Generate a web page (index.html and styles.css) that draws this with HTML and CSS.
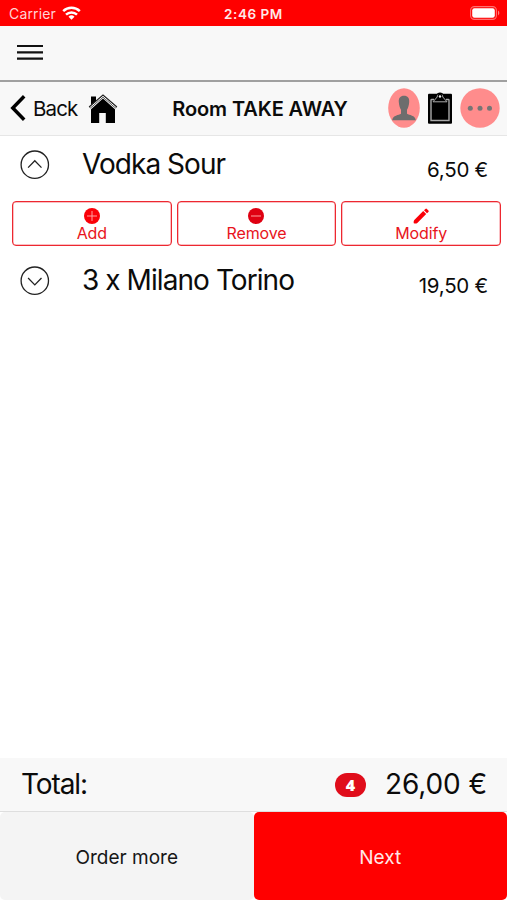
FILE: index.html
```html
<!DOCTYPE html>
<html lang="en">
<head>
<meta charset="utf-8">
<meta name="viewport" content="width=device-width, initial-scale=1">
<title>Room TAKE AWAY</title>
<link rel="stylesheet" href="styles.css">
</head>
<body>
<div class="app">
  <div class="status">
    <div class="status-left">
      <span class="carrier">Carrier</span>
      <svg class="wifi" width="19" height="14" viewBox="0 0 19 14" fill="none" stroke="#fff" stroke-width="2.5"><path d="M1.200 5.200a12 12 0 0 1 16.600 0"/><path d="M4 8.600a8 8 0 0 1 11 0"/><path d="M9.500 13.800 6.500 10.800a4.300 4.300 0 0 1 6 0z" fill="#fff" stroke="none"/></svg>
    </div>
    <span class="clock">2:46 PM</span>
    <svg class="battery" width="30" height="14" viewBox="0 0 30 14"><rect x=".6" y=".6" width="25.800" height="12.800" rx="3.800" fill="none" stroke="#ff7070" stroke-width="1.100"/><rect x="2.200" y="2.200" width="22.600" height="9.600" rx="2.200" fill="#fff"/><path d="M28 4.600c1.800.8 1.800 4 0 4.800z" fill="#ff8080"/></svg>
  </div>
  <header class="menu-bar">
    <svg width="26" height="18" viewBox="0 0 26 18" stroke="#111" stroke-width="2.200"><path d="M0 3h26M0 9.300h26M0 15.600h26"/></svg>
  </header>
  <nav class="nav">
    <div class="nav-left">
      <svg class="chevron" width="16" height="26" viewBox="0 0 16 26" fill="none" stroke="#000" stroke-width="3.500"><path d="M14.200 1.300 2.800 13l11.400 11.700"/></svg>
      <span class="back">Back</span>
      <svg class="home" width="30" height="30" viewBox="0 0 30 30"><path d="M3 2.500h5v4.700L3 11z"/><path d="M15 4.500 3 15.200V29h8.200V19h6.600v10H27V15.200z"/><path d="M1.500 13.500 15 1.800 28.500 13.500" fill="none" stroke="#222" stroke-width="2.400"/><path d="M1.800 13.700 15 2.300 28.200 13.700" fill="none" stroke="#f8f8f8" stroke-width="1"/></svg>
    </div>
    <h1 class="title">Room TAKE AWAY</h1>
    <div class="nav-right">
      <svg width="32" height="40" viewBox="0 0 32 40"><ellipse cx="16" cy="20" rx="15.800" ry="19.700" fill="#ff8c8c"/><path d="M16 7.800c-3.800 0-5.500 2.400-5.200 6.200.2 3.600 1.300 6.300 2.200 7.700v4c-2.200 1.500-8.200 1.400-8.800 6.500h23.600c-.6-5.100-6.600-5-8.800-6.500v-4c.9-1.400 2-4.100 2.200-7.700.3-3.800-1.400-6.200-5.200-6.200z" fill="#6d6d6d"/></svg>
      <svg width="24" height="32" viewBox="0 0 24 32"><rect y="1.700" width="24" height="30" rx="1"/><path d="M6 7.500H3.700q-.7 0-.7.700v20.300h18V8.200q0-.7-.7-.7H18" fill="none" stroke="#aaa" stroke-width="1.400"/><path d="M5 9.800 9.200 5c.3-5 5.300-5 5.600 0L19 9.800z" stroke="#aaa" stroke-width="1"/><path d="M8.500 2.700C9.500-.2 14.500-.2 15.500 2.700z"/><circle cx="12" cy="4.500" r="1.200" fill="#eee"/></svg>
      <svg width="40" height="40" viewBox="0 0 40 40"><circle cx="20" cy="20" r="19.700" fill="#ff8c8c"/><g fill="#757575"><circle cx="10.300" cy="20.300" r="2.500"/><circle cx="20" cy="20.300" r="2.500"/><circle cx="29.500" cy="20.300" r="2.500"/></g></svg>
    </div>
  </nav>
  <main class="order">
    <div class="item">
      <svg class="toggle" width="30" height="30" viewBox="0 0 30 30" fill="none" stroke="#222" stroke-width="1.300"><circle cx="14.800" cy="14.700" r="13.700"/><path d="m8.100 17.600 6.700-6.900 6.700 6.900"/></svg>
      <span class="name vodka">Vodka Sour</span>
      <span class="price">6,50 €</span>
    </div>
    <div class="actions">
      <button class="action"><svg width="16" height="16" viewBox="0 0 16 16"><circle cx="8" cy="8" r="8" fill="#fa0008"/><path d="M8 3v10M3 8h10" stroke="#ffa0a0"/></svg><span>Add</span></button>
      <button class="action"><svg width="16" height="16" viewBox="0 0 16 16"><circle cx="8" cy="8" r="8" fill="#df0012"/><path d="M3 8h10" stroke="#ffa0a0"/></svg><span>Remove</span></button>
      <button class="action"><svg width="16" height="16" viewBox="0 0 16 16" fill="#fa0008"><path d="M.8 15.200q-.5-1.800.5-3.200l8.900-8.900 3 3L4.300 15q-1.500.9-3.500.2zM11 2.300 12.400.9q.7-.7 1.500 0l1.500 1.500q.7.800 0 1.500L14 5.300z"/></svg><span>Modify</span></button>
    </div>
    <div class="item">
      <svg class="toggle" width="30" height="30" viewBox="0 0 30 30" fill="none" stroke="#222" stroke-width="1.300"><circle cx="14.800" cy="14.700" r="13.700"/><path d="m8.100 12 6.700 6.900 6.700-6.900"/></svg>
      <span class="name milano">3 x Milano Torino</span>
      <span class="price">19,50 €</span>
    </div>
  </main>
  <div class="total">
    <span class="total-label">Total:</span>
    <span class="badge">4</span>
    <span class="total-sum">26,00 €</span>
  </div>
  <footer class="footer">
    <button class="more">Order more</button>
    <button class="next">Next</button>
  </footer>
</div>
</body>
</html>
```
FILE: styles.css
```css
* { box-sizing: border-box; }
body { margin: 0; background: #fff; color: #0b0b0b; font-family: Inter, "Liberation Sans", sans-serif; }
svg { display: block; flex: none; }
button { font: inherit; margin: 0; padding: 0; border: 0; }
.app { height: 900px; display: flex; flex-direction: column; white-space: nowrap; }
.status { height: 26px; flex: none; background: #f00; color: #fff; display: grid; grid-template-columns: 1fr auto 1fr; align-items: center; padding: 0 7px 0 9px; font-size: 14px; line-height: 18px; }
.status-left { display: flex; align-items: center; gap: 6px; }
.carrier { color: #ffd4d4; letter-spacing: 0.15px; padding-top: 1px; }
.wifi { margin-bottom: 1px; }
.clock { font-weight: 600; font-size: 13.5px; letter-spacing: 0.55px; color: #ffe8e8; padding-top: 1px; margin-right: 2px; }
.battery { justify-self: end; }
.menu-bar { height: 56px; flex: none; background: #f8f8f8; border-bottom: 2px solid #a0a0a0; padding: 17px; }
.nav { height: 54px; flex: none; background: #f8f8f8; border-bottom: 1px solid #e6e6e6; display: grid; grid-template-columns: 1fr auto 1fr; align-items: center; padding: 0 7px 0 10px; }
.nav-left, .nav-right { display: flex; align-items: center; }
.nav-left { margin-top: -2px; }
.nav-right { justify-content: flex-end; gap: 8px; margin-top: -1px; }
.back { font-size: 20.5px; margin: 2px 0 0 7px; letter-spacing: -0.85px; }
.home { margin-left: 10px; margin-top: 2px; }
.title { margin: 0 -5px 0 5px; font-size: 20px; font-weight: 600; letter-spacing: -0.1px; }
.order { flex: 1; padding-top: 1px; }
.item { display: flex; height: 64px; padding: 0 19px 0 20px; align-items: flex-start; }
.toggle { margin-top: 13px; }
.name { margin: 9px 0 0 32px; font-size: 28px; line-height: 36px; flex: 1; }
.vodka { letter-spacing: -0.95px; }
.milano { letter-spacing: -0.93px; }
.price { margin-top: 20px; font-size: 20.5px; line-height: 26px; letter-spacing: -0.25px; }
.actions { display: grid; grid-template-columns: repeat(3, 1fr); gap: 5px; padding: 0 6px 0 12px; margin-bottom: 7px; }
.action { height: 45px; background: #fff; border: 1px solid #ed2830; box-shadow: inset 0 0 0 0.5px #f58088; border-radius: 4px; color: #e81420; font-size: 16px; line-height: 18px; display: flex; flex-direction: column; align-items: center; padding-top: 6px; letter-spacing: -0.1px; }
.total { height: 54px; flex: none; background: #f8f8f8; border-bottom: 1px solid #dedede; display: flex; align-items: center; padding: 0 20px 0 21px; font-size: 28px; line-height: 34px; }
.total-label { flex: 1; letter-spacing: -1.1px; }
.badge { width: 31px; height: 24px; border-radius: 12px; background: #e00d1b; color: #fff; font: 800 16px/24px "Open Sans", sans-serif; text-align: center; margin-right: 19px; }
.total-sum { letter-spacing: -0.1px; }
.total-label, .total-sum { margin-top: -1px; }
.footer { height: 88px; flex: none; display: grid; grid-template-columns: 1fr 1fr; font-size: 19px; }
.more, .next { border-radius: 5px; padding-top: 2px; }
.more { background: #f4f4f4; color: #161616; }
.next { background: #f00; color: #ffe8e8; }
```
